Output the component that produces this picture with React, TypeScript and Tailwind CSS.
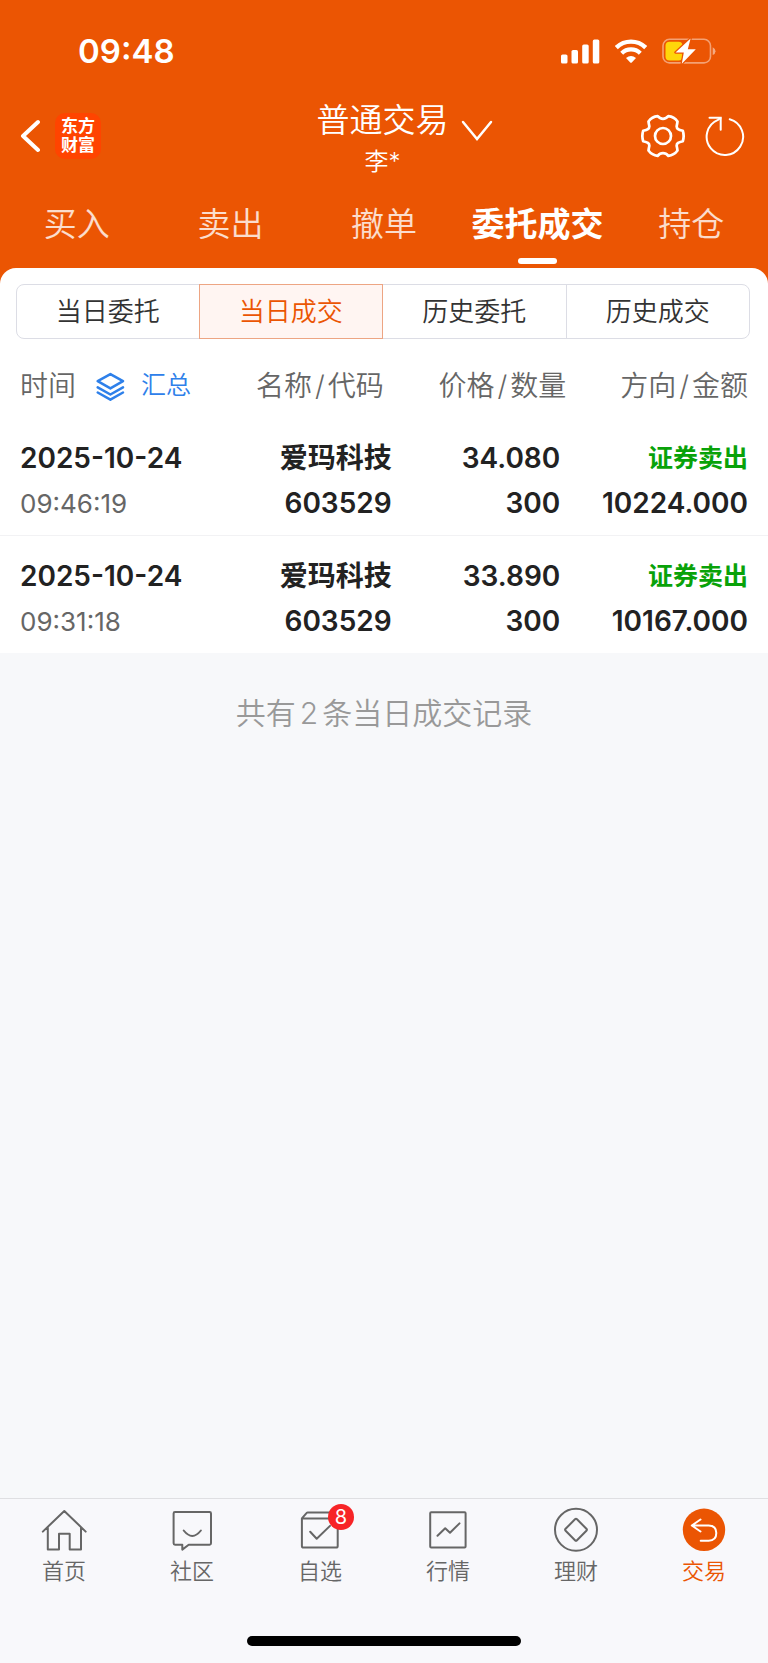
import React from 'react'

interface Trade {
  date: string
  time: string
  name: string
  code: string
  price: string
  quantity: string
  direction: string
  amount: string
}

const menuTabs = ['买入', '卖出', '撤单', '委托成交', '持仓']
const recordTabs = ['当日委托', '当日成交', '历史委托', '历史成交']

const trades: Trade[] = [
  {
    date: '2025-10-24',
    time: '09:46:19',
    name: '爱玛科技',
    code: '603529',
    price: '34.080',
    quantity: '300',
    direction: '证券卖出',
    amount: '10224.000',
  },
  {
    date: '2025-10-24',
    time: '09:31:18',
    name: '爱玛科技',
    code: '603529',
    price: '33.890',
    quantity: '300',
    direction: '证券卖出',
    amount: '10167.000',
  },
]

const NavIcon = ({ children }: { children: React.ReactNode }) => (
  <svg
    viewBox="0 0 44 44"
    className="w-11 h-11 overflow-visible"
    fill="none"
    stroke="currentColor"
    strokeWidth="2"
    strokeLinecap="round"
    strokeLinejoin="round"
    aria-hidden="true"
  >
    {children}
  </svg>
)

const navItems = [
  {
    label: '首页',
    icon: (
      <NavIcon>
        <path d="M.8 23.6 22.3 3l21.4 20.6M5.8 19.5v22.1H17V25.7h10.7v15.9H39V19.5" />
      </NavIcon>
    ),
  },
  {
    label: '社区',
    icon: (
      <NavIcon>
        <path d="M5 4h34.600q1.400 0 1.400 1.400v29.900q0 1.400-1.400 1.400H18.700L12.300 41.600v-4.900H5q-1.400 0-1.400-1.400V5.400Q3.600 4 5 4z" />
        <path d="M13.700 22.500q8.600 10.800 17.200 0" />
      </NavIcon>
    ),
  },
  {
    label: '自选',
    badge: 8,
    icon: (
      <NavIcon>
        <path d="M3.900 10.400h35.800v27.500q0 1.700-1.700 1.700H5.600q-1.700 0-1.700-1.700V10.400l4.800-5.500q.4-.5 1.100-.5h25.100l4.800 6M12.200 23.800l6.500 7L32 17.900" />
      </NavIcon>
    ),
  },
  {
    label: '行情',
    icon: (
      <NavIcon>
        <rect x="4.200" y="4.200" width="35.400" height="35.400" rx="1" />
        <path d="m11.500 27.700 7.700-7.500 4.800 4.600 9.500-9.400" />
      </NavIcon>
    ),
  },
  {
    label: '理财',
    icon: (
      <NavIcon>
        <circle cx="22" cy="21.800" r="21" />
        <path d="m21 11.300-9.400 9.500q-1 1 0 2L21 32.300q1 1 2 0l9.400-9.500q1-1 0-2L23 11.300q-1-1-2 0z" />
      </NavIcon>
    ),
  },
  {
    label: '交易',
    active: true,
    icon: (
      <NavIcon>
        <circle cx="22" cy="21.800" r="21.200" fill="currentColor" stroke="none" />
        <path
          d="m18.500 11.500-8.700 6 8.700 6M10 17.500h16.700q7.600 0 7.600 7.600t-7.600 7.600h-8"
          stroke="white"
        />
      </NavIcon>
    ),
  },
]

const StatusBar = () => (
  <div className="flex items-center justify-between h-[94px] pt-2 pl-[78px] pr-[52px]">
    <span className="text-[33px] font-semibold leading-none">09:48</span>
    <div className="flex items-center gap-[15px]">
      {/* Signal */}
      <svg viewBox="0 0 39 25" className="w-[39px] h-[25px]" fill="currentColor" aria-hidden="true">
        <rect y="15.500" width="6.500" height="9" rx="1.600" />
        <rect x="10.500" y="11" width="6.500" height="13.500" rx="1.600" />
        <rect x="21.200" y="5.500" width="6.500" height="19" rx="1.600" />
        <rect x="31.800" y=".5" width="6.500" height="24" rx="1.600" />
      </svg>
      {/* Wi-Fi */}
      <svg viewBox="0 0 32 25" className="w-8 h-[25px]" fill="none" stroke="currentColor" aria-hidden="true">
        <path d="M1.300 8.600a21 21 0 0 1 29.400 0" strokeWidth="4.300" />
        <path d="M6.700 14.200a13.300 13.300 0 0 1 18.600 0" strokeWidth="4.200" />
        <path d="M11 19q5-4 10 0l-4.200 4.400q-.8.800-1.600 0z" fill="currentColor" stroke="none" />
      </svg>
      {/* Battery, charging */}
      <svg viewBox="0 0 54 26" className="w-[54px] h-[26px]" aria-hidden="true">
        <rect x="1" y="1.300" width="47.500" height="23.600" rx="6.500" fill="none" stroke="white" strokeOpacity=".45" strokeWidth="1.600" />
        <path d="M50.700 9.300q2.800 1.300 2.800 3.900t-2.800 3.900z" fill="white" fillOpacity=".5" />
        <rect x="3.500" y="3.800" width="17" height="18.600" rx="4" fill="#ffd60a" />
        <path
          d="M28.600.5 13.500 14.500h8.300L19.800 25.700 33.800 11.300h-8z"
          fill="white"
          stroke="#eb5503"
          strokeWidth="2.500"
          strokeLinejoin="round"
          paintOrder="stroke"
        />
      </svg>
    </div>
  </div>
)

const TitleBar = () => (
  <div className="grid grid-cols-[1fr_auto_1fr] items-center h-[84px] pl-5 pr-[23px]">
    <div className="flex items-center gap-[15px]">
      <button type="button" aria-label="返回">
        <svg
          viewBox="0 0 20 34"
          className="w-5 h-[34px]"
          fill="none"
          stroke="currentColor"
          strokeWidth="4"
          strokeLinecap="round"
          strokeLinejoin="round"
        >
          <path d="M18 3 3 17l15 14" />
        </svg>
      </button>
      <a
        href="#home"
        className="flex items-center justify-center w-[46px] h-[46px] rounded-[10px] bg-[#ff4400] text-[17px] leading-[19px] font-bold text-center"
      >
        东方
        <br />
        财富
      </a>
    </div>
    <div className="flex flex-col items-center">
      <h1 className="text-[33px] leading-[52px] font-[350]">普通交易</h1>
      <p className="text-2xl leading-8 font-[350]">李*</p>
    </div>
    <div className="flex items-center pl-3">
      <button type="button" aria-label="切换账户" className="pb-2.5">
        <svg viewBox="0 0 32 22" className="w-8 h-[22px]" fill="none" stroke="currentColor" strokeWidth="2.500" strokeLinecap="round">
          <path d="m2 2 14 17L30 2" />
        </svg>
      </button>
      <button type="button" aria-label="设置" className="ml-auto">
        <svg viewBox="0 0 44 44" className="w-11 h-11" fill="none" stroke="currentColor" strokeWidth="2.700" strokeLinejoin="round">
          <path d="M41.800 16.700Q43.500 22 41.800 27.300C38 28.200 35 29 35.800 32.500Q36.300 34.800 36.500 36.500Q33.100 41.200 27.300 41.800C24.500 38.300 19.500 38.300 16.700 41.800Q10.900 41.200 7.500 36.500Q7.700 34.800 8.200 32.500C9 29 6 28.200 2.200 27.300Q.5 22 2.200 16.700C6 15.800 9 15 8.200 11.500Q7.700 9.200 7.500 7.500Q10.900 2.800 16.700 2.200C19.500 5.700 24.500 5.700 27.300 2.200Q33.100 2.800 36.500 7.500Q36.300 9.200 35.800 11.500C35 15 38 15.800 41.800 16.700Z" />
          <circle cx="22" cy="22" r="8" />
        </svg>
      </button>
      <button type="button" aria-label="刷新" className="ml-5">
        <svg viewBox="0 0 40 40" className="w-10 h-10" fill="none" stroke="currentColor" strokeWidth="2" strokeLinecap="round">
          <path d="M24.700 3.200A18.200 18.200 0 1 1 13 3.900L15.500 2" />
          <path d="M4.500 1.800h11.200v12" />
        </svg>
      </button>
    </div>
  </div>
)

const PairHeading = ({ first, second }: { first: string; second: string }) => (
  <>
    {first}
    <span className="mx-[3px]">/</span>
    {second}
  </>
)

const TradeTable = () => (
  <table className="w-full table-fixed">
    <thead>
      <tr className="h-[65px] text-[28px] text-[#666] [&>th]:font-[350]">
        <th className="w-[32%] pl-5 text-left">
          <div className="flex items-center">
            时间
            <button type="button" className="flex items-center gap-4 ml-5 text-[25px] text-[#2e80ea]">
              <svg
                viewBox="0 0 29 30"
                className="w-[29px] h-[30px]"
                fill="none"
                stroke="currentColor"
                strokeWidth="2.500"
                strokeLinecap="round"
                strokeLinejoin="round"
                aria-hidden="true"
              >
                <path d="M14.400 3.100 27 10.200l-12.600 7.200L1.700 10.200zM1.700 16.300 14.400 23.500 27 16.300M1.700 21.500l12.700 7.200L27 21.500" />
              </svg>
              汇总
            </button>
          </div>
        </th>
        <th className="w-[19%] pr-2 text-right whitespace-nowrap">
          <PairHeading first="名称" second="代码" />
        </th>
        <th className="w-[23%] pr-0.5 text-right whitespace-nowrap">
          <PairHeading first="价格" second="数量" />
        </th>
        <th className="w-[26%] pr-5 text-right whitespace-nowrap">
          <PairHeading first="方向" second="金额" />
        </th>
      </tr>
    </thead>
    <tbody className="text-[28px] leading-[45px] font-semibold text-[#222]">
      {trades.map((trade) => (
        <tr
          key={trade.time}
          className="border-b border-[#f2f2f4] last:border-b-0 [&>td]:pt-[18px] [&>td]:pb-[9px] [&>td>span]:block [&>td>span]:h-[45px]"
        >
          <td className="pl-5">
            <span>{trade.date}</span>
            <span className="text-[26px] font-normal text-[#666]">{trade.time}</span>
          </td>
          <td className="text-right">
            <span>{trade.name}</span>
            <span>{trade.code}</span>
          </td>
          <td className="pr-2 text-right">
            <span>{trade.price}</span>
            <span>{trade.quantity}</span>
          </td>
          <td className="pr-5 text-right">
            <span className="text-[25px] text-[#09a209]">{trade.direction}</span>
            <span>{trade.amount}</span>
          </td>
        </tr>
      ))}
    </tbody>
  </table>
)

const BottomNav = () => (
  <nav className="border-t border-[#dfdfe2] bg-[#f8f8fb]">
    <div className="grid grid-cols-6 pt-[9px]">
      {navItems.map((item) => (
        <a
          key={item.label}
          href={`#${item.label}`}
          className={`flex flex-col items-center gap-1 ${item.active ? 'text-[#eb5503]' : 'text-[#666]'}`}
        >
          <span className="relative">
            {item.icon}
            {item.badge && (
              <span className="absolute -top-1 left-[30px] flex items-center justify-center w-[26px] h-[26px] rounded-full bg-[#f72427] text-xl leading-none text-white">
                {item.badge}
              </span>
            )}
          </span>
          <span className="text-[22px] leading-[30px] font-[350]">{item.label}</span>
        </a>
      ))}
    </div>
    {/* Home indicator */}
    <div className="w-[274px] h-2.5 mx-auto mt-[50px] mb-[17px] rounded-full bg-black" />
  </nav>
)

export default function App() {
  return (
    <div className="flex flex-col min-h-screen bg-[#f7f8fa] font-[Inter,'Noto_Sans_CJK_SC',sans-serif]">
      <div className="bg-[#eb5503]">
        <header className="text-white">
          <StatusBar />
          <TitleBar />
          <nav className="grid grid-cols-5 h-[90px] pt-[23px]">
            {menuTabs.map((tab) => (
              <a
                key={tab}
                href={`#${tab}`}
                className={`flex flex-col items-center text-[33px] leading-[46px] whitespace-nowrap ${
                  tab === '委托成交' ? 'font-bold' : 'font-[350] text-white/80'
                }`}
              >
                {tab}
                {tab === '委托成交' && <span className="w-[39px] h-1.5 mt-[11px] rounded-full bg-white" />}
              </a>
            ))}
          </nav>
        </header>

        {/* Record type switch */}
        <div className="pl-4 pr-[18px] pt-4 pb-3.5 rounded-t-2xl bg-white">
          <div className="grid grid-cols-4 h-[55px]">
            {recordTabs.map((tab) => (
              <button
                key={tab}
                type="button"
                className={`border text-[26px] font-[350] first:rounded-l-lg last:rounded-r-lg not-first:-ml-px ${
                  tab === '当日成交'
                    ? 'relative border-[#eda583] bg-[#fff5f2] text-[#eb5503]'
                    : 'border-[#dcdde5] text-[#333]'
                }`}
              >
                {tab}
              </button>
            ))}
          </div>
        </div>
      </div>

      <main className="flex-1">
        <div className="bg-white">
          <TradeTable />
        </div>
        <p className="pt-10 text-center text-[30px] leading-10 font-[350] text-[#999]">
          共有<span className="mx-1">2</span>条当日成交记录
        </p>
      </main>

      <BottomNav />
    </div>
  )
}
